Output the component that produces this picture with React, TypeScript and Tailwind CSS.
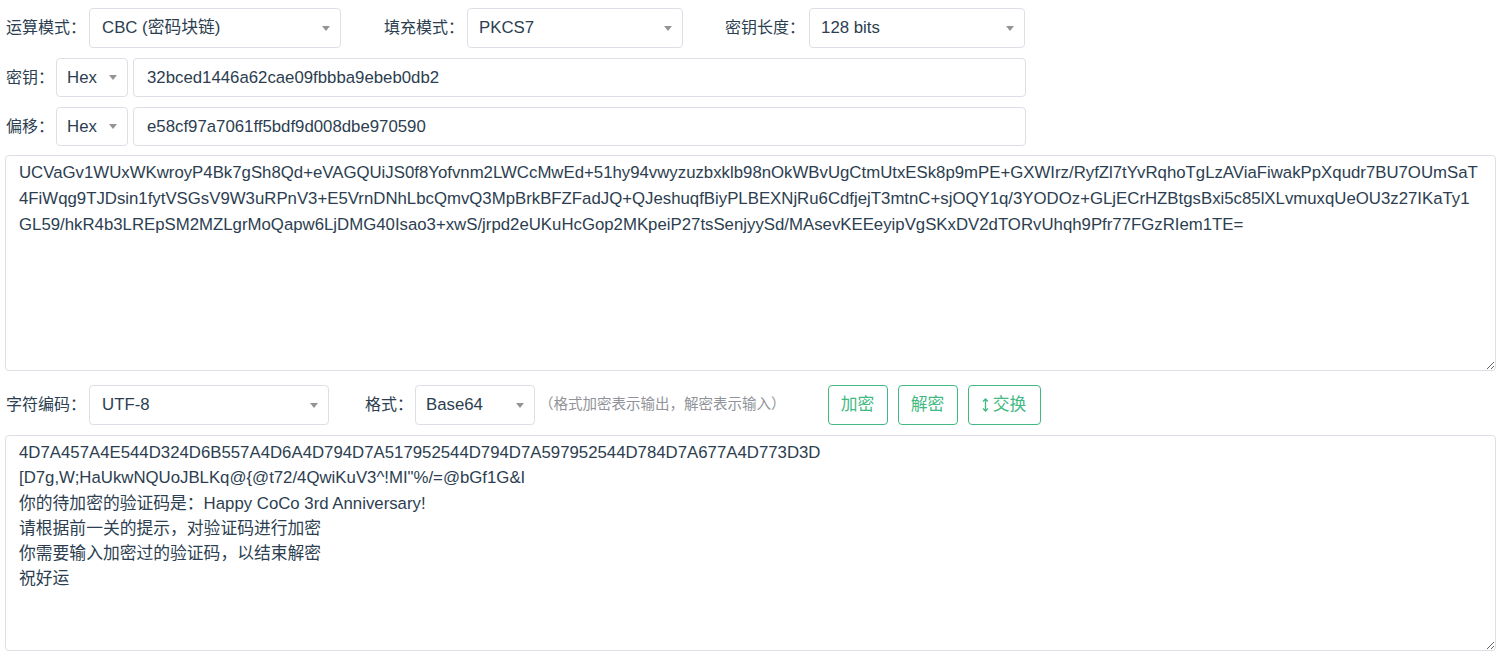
import React from 'react';

const cipherText =
  'UCVaGv1WUxWKwroyP4Bk7gSh8Qd+eVAGQUiJS0f8Yofvnm2LWCcMwEd+51hy94vwyzuzbxklb98nOkWBvUgCtmUtxESk8p9mPE+GXWIrz/RyfZl7tYvRqhoTgLzAViaFiwakPpXqudr7BU7OUmSaT4FiWqg9TJDsin1fytVSGsV9W3uRPnV3+E5VrnDNhLbcQmvQ3MpBrkBFZFadJQ+QJeshuqfBiyPLBEXNjRu6CdfjejT3mtnC+sjOQY1q/3YODOz+GLjECrHZBtgsBxi5c85lXLvmuxqUeOU3z27IKaTy1GL59/hkR4b3LREpSM2MZLgrMoQapw6LjDMG40Isao3+xwS/jrpd2eUKuHcGop2MKpeiP27tsSenjyySd/MAsevKEEeyipVgSKxDV2dTORvUhqh9Pfr77FGzRIem1TE=';

const plainText = [
  '4D7A457A4E544D324D6B557A4D6A4D794D7A517952544D794D7A597952544D784D7A677A4D773D3D',
  '[D7g,W;HaUkwNQUoJBLKq@{@t72/4QwiKuV3^!MI"%/=@bGf1G&I',
  '你的待加密的验证码是：Happy CoCo 3rd Anniversary!',
  '请根据前一关的提示，对验证码进行加密',
  '你需要输入加密过的验证码，以结束解密',
  '祝好运',
].join('\n');

const font = { fontFamily: '"Liberation Sans", Arial, "Noto Sans CJK SC", sans-serif' };

const Caret = () => (
  <svg width="8" height="5" viewBox="0 0 8 5" className="shrink-0">
    <path d="M0 0 L8 0 L4 5 Z" fill="#949494" />
  </svg>
);

// Element-style fake select box
const Select: React.FC<{ value: string; width: string; pad?: string }> = ({ value, width, pad = 'pl-3' }) => (
  <div
    className={`${width} h-full flex items-center justify-between ${pad} pr-[10px] border border-[#dcdfe6] rounded-[4px] bg-white text-[16.8px]`}
  >
    <span className="truncate">{value}</span>
    <Caret />
  </div>
);

const Label: React.FC<{ children: React.ReactNode; className?: string }> = ({ children, className = '' }) => (
  <span className={`whitespace-nowrap ${className}`}>{children}</span>
);

const OutlineButton: React.FC<{ children: React.ReactNode; className?: string }> = ({ children, className = '' }) => (
  <button
    className={`h-full flex items-center justify-center gap-[4px] border border-[#42b983] text-[#42b983] text-[16.8px] rounded-[4px] bg-white ${className}`}
  >
    {children}
  </button>
);

export default function App() {
  return (
    <div
      className="w-[1501px] h-[659px] bg-white text-[#2c3e50] text-[16px] px-[5px] pt-[8px] flex flex-col overflow-hidden"
      style={font}
    >
      {/* Mode row */}
      <div className="h-[40px] flex items-center pl-[1px]">
        <Label className="mr-[3px]">运算模式：</Label>
        <Select value="CBC (密码块链)" width="w-[252px]" />
        <Label className="ml-[43px] mr-[3px]">填充模式：</Label>
        <Select value="PKCS7" width="w-[216px]" pad="pl-[11px]" />
        <Label className="ml-[42px] mr-[4px]">密钥长度：</Label>
        <Select value="128 bits" width="w-[216px]" pad="pl-[11px]" />
      </div>

      {/* Key */}
      <div className="h-[39px] mt-[10px] flex items-center pl-[1px]">
        <Label className="mr-[2px]">密钥：</Label>
        <Select value="Hex" width="w-[72px]" pad="pl-[10px]" />
        <div className="ml-[5px] w-[893px] h-full flex items-center px-[13px] border border-[#dcdfe6] rounded-[4px] text-[16.8px]">
          32bced1446a62cae09fbbba9ebeb0db2
        </div>
      </div>

      {/* IV */}
      <div className="h-[39px] mt-[10px] flex items-center pl-[1px]">
        <Label className="mr-[2px]">偏移：</Label>
        <Select value="Hex" width="w-[72px]" pad="pl-[10px]" />
        <div className="ml-[5px] w-[893px] h-full flex items-center px-[13px] border border-[#dcdfe6] rounded-[4px] text-[16.8px]">
          e58cf97a7061ff5bdf9d008dbe970590
        </div>
      </div>

      <textarea
        readOnly
        defaultValue={cipherText}
        className="block mt-[9px] w-[1491px] h-[216px] shrink-0 px-[13px] py-[4px] text-[16.8px] leading-[26px] border border-[#dcdfe6] rounded-[4px] text-[#2c3e50] outline-none"
        style={font}
      />

      {/* Encoding + actions */}
      <div className="h-[40px] mt-[14px] flex items-center pl-[1px]">
        <Label className="mr-[3px]">字符编码：</Label>
        <Select value="UTF-8" width="w-[240px]" />
        <Label className="ml-[36px] mr-[2px]">格式：</Label>
        <Select value="Base64" width="w-[120px]" pad="pl-[10px]" />
        <span className="ml-[4px] text-[14.5px] text-[#909399] whitespace-nowrap">（格式加密表示输出，解密表示输入）</span>
        <div className="ml-[42px] h-full flex gap-[10px]">
          <OutlineButton className="w-[60px]">加密</OutlineButton>
          <OutlineButton className="w-[60px]">解密</OutlineButton>
          <OutlineButton className="w-[73px]">
            <svg width="7" height="14" viewBox="0 0 7 14" fill="none" stroke="#42b983" strokeWidth="1.3">
              <path d="M3.5 1 V13 M1 3.5 L3.5 1 L6 3.5 M1 10.5 L3.5 13 L6 10.5" />
            </svg>
            交换
          </OutlineButton>
        </div>
      </div>

      <textarea
        readOnly
        defaultValue={plainText}
        className="block mt-[10px] w-[1491px] h-[216px] shrink-0 px-[13px] py-[4px] text-[16.8px] leading-[25.3px] border border-[#dcdfe6] rounded-[4px] text-[#2c3e50] outline-none"
        style={font}
      />
    </div>
  );
}
